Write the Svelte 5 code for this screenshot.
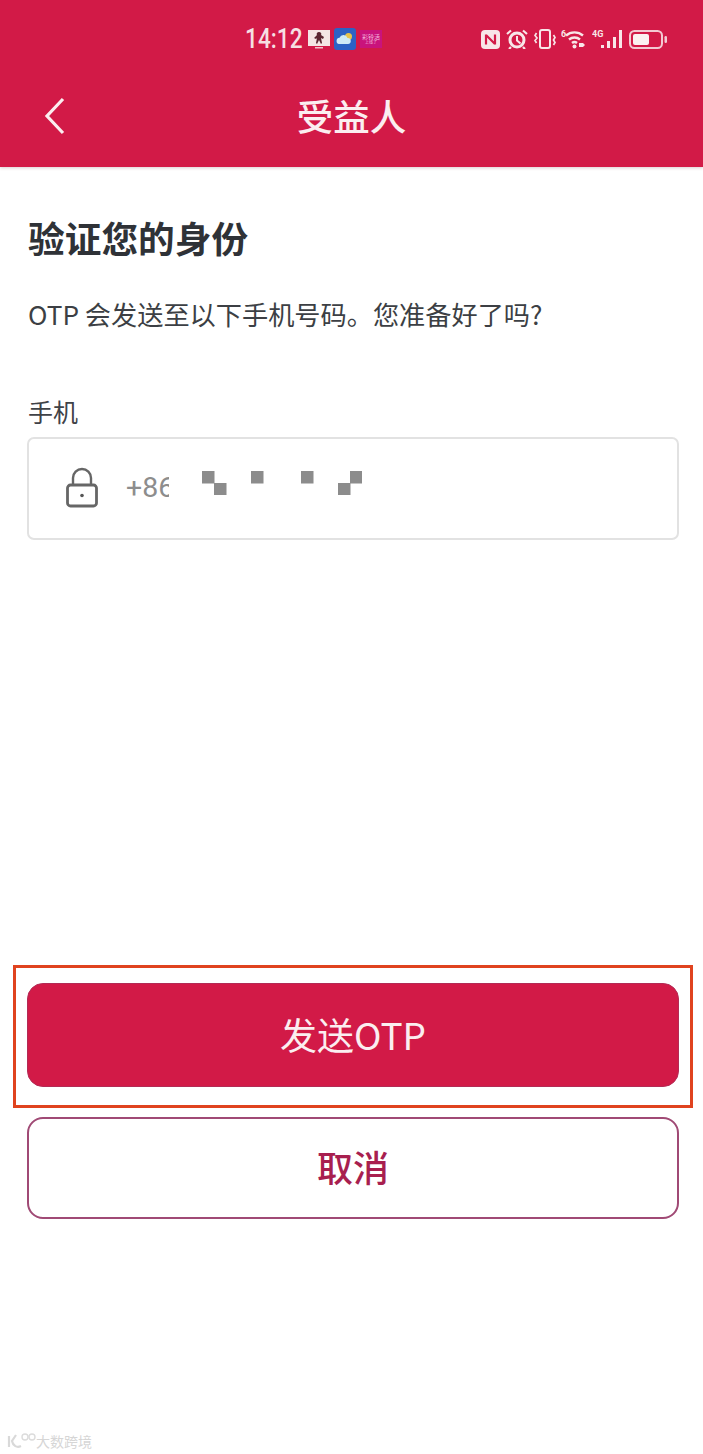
<script>
  const mosaic = [[0,0],[12,12],[49,0],[99,0],[136,12],[148,0]];
</script>

<div class="page">
  <header class="header">
    <div class="status">
      <span class="time">14:12</span>
      <svg class="ic" width="22" height="20" viewBox="0 0 22 20">
        <rect width="22" height="16" y="1" fill="#f4e6e4"/>
        <path d="M11 3c-2 0-3 2-2 3l-3 3 2 1 1-1-1 5 1 1 2-4 2 4 1-1-1-5 2 1 1-2-3-2c1-1 0-3-2-3z" fill="#5a2630"/>
        <rect x="7" y="18" width="8" height="1.5" fill="#f0c0c8"/>
      </svg>
      <svg class="ic blue" width="22" height="22" viewBox="0 0 22 22">
        <rect width="22" height="22" rx="3" fill="#2c62c4"/>
        <circle cx="14.5" cy="8.5" r="3.5" fill="#e8c34a"/>
        <path d="M5 16a3.2 3.2 0 0 1 .5-6.3A4.3 4.3 0 0 1 13.5 10a3 3 0 0 1 .5 6z" fill="#cfeaf6"/>
      </svg>
      <span class="pink"><i>彩铃活</i><b>上线了</b></span>
      <div class="right">
        <svg width="19" height="19" viewBox="0 0 19 19">
          <rect width="19" height="19" rx="4" fill="#f8e6e8"/>
          <path d="M5 4.5v10M14 4.5v10M5 5l9 9" fill="none" stroke="#d21a47" stroke-width="2.2"/>
        </svg>
        <svg width="24" height="20" viewBox="0 0 24 20">
          <circle cx="12" cy="11" r="7" fill="none" stroke="#f8e6e8" stroke-width="3"/>
          <path d="M12 7v4.5l3.5 3" fill="none" stroke="#f8e6e8" stroke-width="2"/>
          <path d="M2 5l4-3.5M22 5l-4-3.5M6 18l-2 2M18 18l2 2" fill="none" stroke="#f8e6e8" stroke-width="2.2"/>
        </svg>
        <svg width="22" height="20" viewBox="0 0 22 20">
          <rect x="6" y="1" width="10" height="18" rx="2" fill="none" stroke="#f8e6e8" stroke-width="2"/>
          <path d="M2.5 4l-1.500 2.500 2 2.500-2 2.500 1.500 2.500M19.500 6l1.500 2.500-1.500 2.500 1.500 2.500-1.500 2.500" fill="none" stroke="#f8e6e8" stroke-width="1.700"/>
        </svg>
        <svg class="wifi" width="26" height="20" viewBox="0 0 26 20">
          <path d="M5 6.500a13 13 0 0 1 17 0M8 10.500a8.500 8.500 0 0 1 11 0M11 14a4 4 0 0 1 5 0" fill="none" stroke="#f8e6e8" stroke-width="2.400"/>
          <circle cx="13.500" cy="17.500" r="2" fill="#f8e6e8"/>
          <path d="M18 14h4l2 2-2 2h-4z" fill="#f8e6e8"/>
          <text x="0" y="8" class="tiny">6</text>
        </svg>
        <svg class="signal" width="32" height="20" viewBox="0 0 32 20">
          <text x="0" y="8" class="tiny">4G</text>
          <rect x="9" y="16" width="3" height="3" fill="#f8e6e8"/>
          <rect x="15" y="12" width="3" height="7" fill="#f8e6e8"/>
          <rect x="21" y="8" width="3" height="11" fill="#f8e6e8"/>
          <rect x="27" y="1" width="3" height="18" fill="#f8e6e8"/>
        </svg>
        <svg class="battery" width="39" height="19" viewBox="0 0 39 19">
          <rect x="1" y="1" width="32" height="17" rx="4.500" fill="none" stroke="#f3c9d2" stroke-width="2"/>
          <rect x="4" y="4" width="16" height="11" rx="2" fill="#fbf1f1"/>
          <rect x="35.500" y="6" width="2.500" height="7" rx="1.200" fill="#f3c9d2"/>
        </svg>
      </div>
    </div>
    <div class="nav">
      <svg class="back" width="24" height="38" viewBox="0 0 24 38">
        <path d="M20 2 L4 19 L20 36" fill="none" stroke="#fbeef0" stroke-width="3.200"/>
      </svg>
      <h2>受益人</h2>
    </div>
  </header>

  <main class="main">
    <h1>验证您的身份</h1>
    <p class="sub">OTP 会发送至以下手机号码。您准备好了吗?</p>
    <label class="label" for="phone">手机</label>
    <div class="field" id="phone">
      <svg class="lock" width="34" height="42" viewBox="0 0 34 42">
        <path d="M8 19v-8a9 9 0 0 1 18 0v8" fill="none" stroke="#666" stroke-width="2.400"/>
        <rect x="2.500" y="18" width="29" height="21" rx="3" fill="none" stroke="#666" stroke-width="2.800"/>
        <circle cx="17" cy="28.500" r="1.800" fill="#555"/>
      </svg>
      <span class="prefix">+86</span>
      <svg class="mosaic" width="160" height="24" viewBox="0 0 160 24">
        {#each mosaic as [x, y]}
          <rect {x} {y} width="12.500" height="12.500" fill="#8c8c8c"/>
        {/each}
      </svg>
    </div>

    <div class="highlight">
      <button class="btn primary" type="button">发送OTP</button>
    </div>
    <button class="btn secondary" type="button">取消</button>
  </main>

  <footer class="mark">
    <svg width="30" height="18" viewBox="0 0 30 18">
      <path d="M3 4v11M10 3L6 9c1 5 5 7 9 5" fill="none" stroke="#d9d9d9" stroke-width="2.200"/>
      <circle cx="19" cy="5" r="3" fill="none" stroke="#dcdcdc" stroke-width="1.400"/>
      <circle cx="26" cy="5" r="3" fill="none" stroke="#dcdcdc" stroke-width="1.400"/>
    </svg>
    <span>大数跨境</span>
  </footer>
</div>

<style>
  :global(body) {
    margin: 0;
    background: #fff;
  }
  .page {
    width: 703px;
    height: 1454px;
    display: flex;
    flex-direction: column;
    overflow: hidden;
    background: #fff;
    font-family: "Noto Sans CJK SC", "Noto Sans", sans-serif;
  }
  .header {
    height: 167px;
    flex: none;
    background: #d21a47;
    color: #fbeef0;
    box-shadow: 0 1px 3px rgba(120, 60, 70, 0.25);
    box-sizing: border-box;
    padding-top: 27px;
  }
  .status {
    height: 24px;
    display: flex;
    align-items: center;
    padding: 0 35px 0 245px;
  }
  .time {
    width: 59px;
    margin-right: 4px;
    font-family: "Roboto", sans-serif;
    font-size: 27px;
    font-weight: 500;
    line-height: 24px;
    color: #f6dfe2;
    white-space: nowrap;
    transform: scaleX(0.84);
    transform-origin: left center;
  }
  .ic {
    flex: none;
    margin-right: 4px;
  }
  .pink {
    width: 22px;
    height: 18px;
    background: #c9137c;
    color: #f4b9dc;
    display: flex;
    flex-direction: column;
    align-items: center;
    justify-content: center;
    font-size: 6px;
    line-height: 7px;
  }
  .pink i {
    font-style: normal;
  }
  .pink b {
    font-weight: 400;
    font-size: 4px;
    line-height: 5px;
  }
  .right {
    margin-left: auto;
    display: flex;
    align-items: center;
    gap: 5px;
  }
  .tiny {
    font-family: "Roboto", sans-serif;
    font-size: 9px;
    font-weight: 700;
    fill: #f8e6e8;
  }
  .nav {
    height: 76px;
    margin-top: 27px;
    position: relative;
    display: flex;
    align-items: center;
    justify-content: center;
  }
  .nav h2 {
    margin: 0;
    font-size: 36.500px;
    font-weight: 500;
    line-height: 50px;
    color: #fbeef0;
  }
  .back {
    position: absolute;
    left: 43px;
    top: 19px;
  }
  .main {
    flex: 1;
    display: flex;
    flex-direction: column;
    padding: 0 24px 0 27px;
  }
  h1 {
    margin: 44px 0 0 1px;
    font-size: 36.700px;
    font-weight: 700;
    line-height: 52px;
    color: #2f3237;
  }
  .sub {
    margin: 31px 0 0 1px;
    font-size: 26.200px;
    line-height: 40px;
    color: #3c3f44;
    white-space: nowrap;
  }
  .label {
    margin: 59px 0 0 1px;
    font-size: 25px;
    line-height: 36px;
    color: #3f4247;
  }
  .field {
    margin-top: 8px;
    height: 103px;
    box-sizing: border-box;
    border: 2px solid #e2e2e2;
    border-radius: 7px;
    display: flex;
    align-items: center;
    padding-left: 36px;
  }
  .lock {
    flex: none;
    margin-top: -2px;
  }
  .prefix {
    width: 43px;
    margin-left: 27px;
    margin-bottom: 2px;
    overflow: hidden;
    font-family: "Roboto", sans-serif;
    font-size: 28.500px;
    color: #8d8d8d;
    white-space: nowrap;
  }
  .mosaic {
    margin: 0 0 12px 33px;
    flex: none;
  }
  .highlight {
    margin: 425px -14px 0 -14px;
    height: 143px;
    box-sizing: border-box;
    border: 3px solid #e0431f;
    padding: 15px 11px 0 11px;
  }
  .btn {
    display: block;
    width: 100%;
    height: 104px;
    box-sizing: border-box;
    font-family: inherit;
    font-size: 36px;
    padding: 0;
  }
  .primary {
    background: #d21a47;
    color: #fbeef0;
    border: 1px solid #b32a55;
    border-radius: 16px;
    font-size: 37px;
    padding-bottom: 2px;
  }
  .secondary {
    margin-top: 9px;
    height: 102px;
    background: #fff;
    color: #a81f4f;
    border: 2px solid #a04a75;
    border-radius: 16px;
    font-weight: 500;
    padding-bottom: 4px;
  }
  .mark {
    flex: none;
    height: 26px;
    display: flex;
    align-items: center;
    gap: 0;
    padding-left: 6px;
    color: #d6d6d6;
    font-size: 14px;
  }
</style>
